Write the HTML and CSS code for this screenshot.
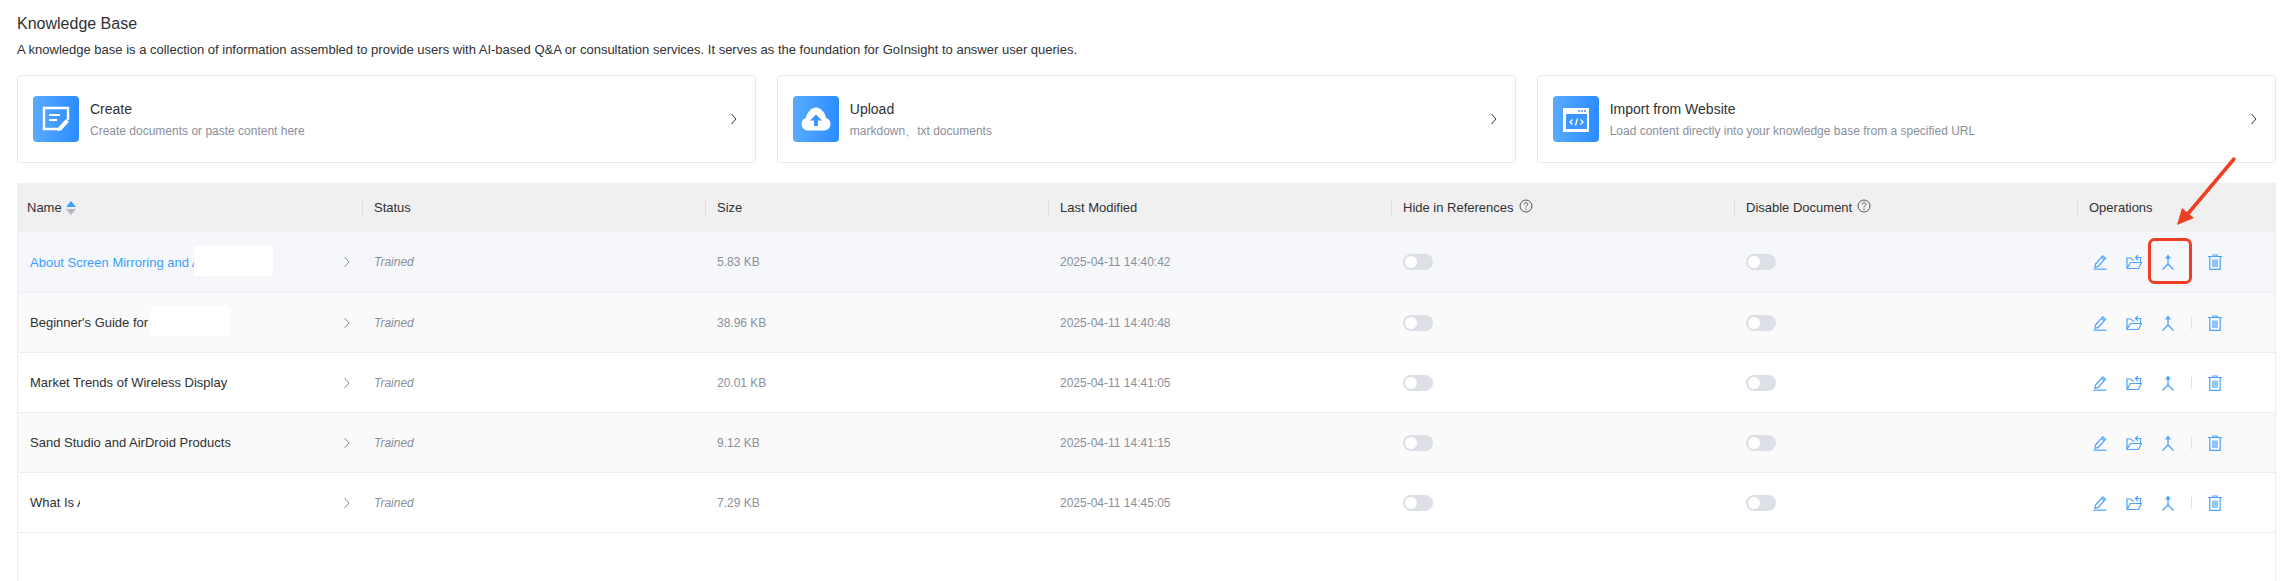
FILE: index.html

```html
<!DOCTYPE html>
<html lang="en">
<head>
    <meta charset="UTF-8">
    <title>Knowledge Base</title>
    <meta name="viewport" content="width=device-width, initial-scale=1.0">
    <link rel="stylesheet" href="styles.css">
</head>
<body>

<svg class="defs" width="0" height="0">
    <symbol id="i-edit" viewBox="0 0 16 16"><path d="M3.500 10 10.800 1.800l2.700 2.400-7.300 8.200-3.200.9zM9.500 3.300l2.700 2.400" fill="none" stroke="currentColor" stroke-width="1.200"/><path d="M1.500 15.200h13" stroke="currentColor" stroke-width="1.200"/></symbol>
    <symbol id="i-folder" viewBox="0 0 16 16"><path d="M1 7V14.500h11.500L15.500 8.500H4.500L1 14.500M1 7V4h4l1.500 2h2M9.500 3.500H14.500V8M12 1 9.500 3.500 12 6" fill="none" stroke="currentColor" stroke-width="1.200"/></symbol>
    <symbol id="i-merge" viewBox="0 0 16 16"><path d="M8 3v7M8 10 2.500 15.500M8 10l5.500 5.500" fill="none" stroke="currentColor" stroke-width="1.300"/><path d="M8 .5 5 4.500h6z" fill="currentColor"/></symbol>
    <symbol id="i-trash" viewBox="0 0 16 16"><path d="M1 2.500h14M6 2.500V1h4v1.500M2.800 2.500v12.800h10.400V2.500M6 5.500v7.500M8 5.500v7.500M10 5.500v7.500" fill="none" stroke="currentColor" stroke-width="1.200"/></symbol>
    <symbol id="i-chev" viewBox="0 0 8 12"><path d="M1.500 1 6 6l-4.500 5" fill="none" stroke="currentColor"/></symbol>
    <symbol id="i-help" viewBox="0 0 14 14"><circle cx="7" cy="7" r="6" fill="none" stroke="currentColor"/><path d="M5.200 5.400C5.200 3 8.800 3 8.800 5.300 8.800 6.700 7 6.700 7 8.400" fill="none" stroke="currentColor"/><circle cx="7" cy="10.300" r=".7" fill="currentColor"/></symbol>
</svg>

<div class="page">
    <h1 class="title">Knowledge Base</h1>
    <p class="intro">A knowledge base is a collection of information assembled to provide users with AI-based Q&amp;A or consultation services. It serves as the foundation for GoInsight to answer user queries.</p>

    <div class="cards">
        <div class="card">
            <svg class="card-icon" viewBox="0 0 46 46"><path d="M29 33H11V12h24v12" fill="none" stroke="#fff" stroke-width="2.400"/><path d="M16 19h11M16 24h8" stroke="#fff" stroke-width="2"/><path d="M24.500 35.500l1.200-4.500 7.300-8 3 2.700-7.300 8z" fill="#fff"/></svg>
            <div class="card-text">
                <div class="card-name">Create</div>
                <div class="card-desc">Create documents or paste content here</div>
            </div>
            <svg class="card-chev"><use href="#i-chev"/></svg>
        </div>
        <div class="card">
            <svg class="card-icon" viewBox="0 0 46 46"><path d="M15 34a6 6 0 0 1-1.500-11.800C14.500 16 18.500 12 23 12s8.500 4 9.500 10.200A6 6 0 0 1 31 34z" fill="#fff" stroke="#fff" stroke-width="1"/><path d="M23 18.500 17 24.500h4V30h4v-5.500h4z" fill="#3b96ff"/></svg>
            <div class="card-text">
                <div class="card-name">Upload</div>
                <div class="card-desc">markdown、txt documents</div>
            </div>
            <svg class="card-chev"><use href="#i-chev"/></svg>
        </div>
        <div class="card">
            <svg class="card-icon" viewBox="0 0 46 46"><path d="M10 12h26v24H10z" fill="#fff"/><path d="M13 18h21v15H13z" fill="#3b96ff"/><path d="M25 15h2M28 15h2M31 15h2" stroke="#3b96ff" stroke-width="1.500"/><path d="M19.500 23.500 17 26l2.500 2.500M27.500 23.500 30 26l-2.500 2.500M24.500 22.500l-2 7" fill="none" stroke="#fff" stroke-width="1.300"/></svg>
            <div class="card-text">
                <div class="card-name">Import from Website</div>
                <div class="card-desc">Load content directly into your knowledge base from a specified URL</div>
            </div>
            <svg class="card-chev"><use href="#i-chev"/></svg>
        </div>
    </div>

    <div class="table-wrap">
        <table class="docs">
            <colgroup>
                <col class="c-name"><col class="c-mid"><col class="c-mid"><col class="c-mid"><col class="c-mid"><col class="c-mid"><col>
            </colgroup>
            <thead>
                <tr>
                    <th><span class="th-in">Name <span class="sort"><i class="up"></i><i class="down"></i></span></span></th>
                    <th><span class="th-in">Status</span></th>
                    <th><span class="th-in">Size</span></th>
                    <th><span class="th-in">Last Modified</span></th>
                    <th><span class="th-in">Hide in References <svg class="help"><use href="#i-help"/></svg></span></th>
                    <th><span class="th-in">Disable Document <svg class="help"><use href="#i-help"/></svg></span></th>
                    <th class="last"><span class="th-in">Operations</span></th>
                </tr>
            </thead>
            <tbody>
                <tr class="hover">
                    <td class="name link"><span>About Screen Mirroring and AirDroid</span><span class="mask mask-1"></span><svg class="row-chev"><use href="#i-chev"/></svg></td>
                    <td class="status">Trained</td><td>5.83 KB</td><td>2025-04-11 14:40:42</td>
                    <td><span class="switch"></span></td><td><span class="switch"></span></td>
                    <td class="ops"><svg><use href="#i-edit"/></svg><svg><use href="#i-folder"/></svg><svg><use href="#i-merge"/></svg><svg class="del"><use href="#i-trash"/></svg></td>
                </tr>
                <tr class="stripe">
                    <td class="name"><span>Beginner's Guide for</span><span class="mask mask-2"></span><svg class="row-chev"><use href="#i-chev"/></svg></td>
                    <td class="status">Trained</td><td>38.96 KB</td><td>2025-04-11 14:40:48</td>
                    <td><span class="switch"></span></td><td><span class="switch"></span></td>
                    <td class="ops"><svg><use href="#i-edit"/></svg><svg><use href="#i-folder"/></svg><svg><use href="#i-merge"/></svg><i class="sep"></i><svg class="del"><use href="#i-trash"/></svg></td>
                </tr>
                <tr>
                    <td class="name"><span>Market Trends of Wireless Display</span><svg class="row-chev"><use href="#i-chev"/></svg></td>
                    <td class="status">Trained</td><td>20.01 KB</td><td>2025-04-11 14:41:05</td>
                    <td><span class="switch"></span></td><td><span class="switch"></span></td>
                    <td class="ops"><svg><use href="#i-edit"/></svg><svg><use href="#i-folder"/></svg><svg><use href="#i-merge"/></svg><i class="sep"></i><svg class="del"><use href="#i-trash"/></svg></td>
                </tr>
                <tr class="stripe">
                    <td class="name"><span>Sand Studio and AirDroid Products</span><svg class="row-chev"><use href="#i-chev"/></svg></td>
                    <td class="status">Trained</td><td>9.12 KB</td><td>2025-04-11 14:41:15</td>
                    <td><span class="switch"></span></td><td><span class="switch"></span></td>
                    <td class="ops"><svg><use href="#i-edit"/></svg><svg><use href="#i-folder"/></svg><svg><use href="#i-merge"/></svg><i class="sep"></i><svg class="del"><use href="#i-trash"/></svg></td>
                </tr>
                <tr>
                    <td class="name"><span>What Is AirDroid</span><span class="mask mask-3"></span><svg class="row-chev"><use href="#i-chev"/></svg></td>
                    <td class="status">Trained</td><td>7.29 KB</td><td>2025-04-11 14:45:05</td>
                    <td><span class="switch"></span></td><td><span class="switch"></span></td>
                    <td class="ops"><svg><use href="#i-edit"/></svg><svg><use href="#i-folder"/></svg><svg><use href="#i-merge"/></svg><i class="sep"></i><svg class="del"><use href="#i-trash"/></svg></td>
                </tr>
            </tbody>
        </table>
    </div>

    <!-- red annotation drawn over the screenshot -->
    <svg class="annot" width="120" height="135" viewBox="0 0 120 135">
        <path d="M90 3 42 60" fill="none" stroke="#ee3e23" stroke-width="3.500" stroke-linecap="round"/>
        <path d="M33 69 38 52 50 62z" fill="#ee3e23"/>
        <rect x="5.500" y="83.500" width="41" height="43" rx="5" fill="none" stroke="#ee3e23" stroke-width="3"/>
    </svg>
</div>

</body>
</html>
```

FILE: styles.css

```css
* { box-sizing: border-box; }
html, body { margin: 0; padding: 0; height: 100%; overflow: hidden; }
body { font-family: "Liberation Sans", Arial, sans-serif; background: #fff; color: #303133; }
.defs { position: absolute; }

.page { position: relative; height: 581px; padding: 14px 9px 0 17px; }
.title { margin: 0; font-size: 16px; font-weight: normal; line-height: 20px; color: #303133; }
.intro { margin: 7px 0 0; font-size: 13px; line-height: 18px; color: #303133; white-space: nowrap; }

.cards { display: grid; grid-template-columns: repeat(3, 1fr); gap: 20.5px; margin-top: 16px; }
.card { display: flex; align-items: center; height: 88px; padding: 0 17px 0 15px; border: 1px solid #e8e8e8; border-radius: 4px; }
.card-icon { flex: none; width: 46px; height: 46px; border-radius: 4px; background: linear-gradient(90deg, #5aabff, #2b8cff); }
.card-text { flex: 1; margin-left: 11px; }
.card-name { font-size: 14px; line-height: 18px; color: #303133; }
.card-desc { margin-top: 5px; font-size: 12px; line-height: 16px; color: #8a8f9c; }
.card-chev { flex: none; width: 8px; height: 12px; color: #333; }

.table-wrap { height: 400px; margin-top: 20px; border-left: 1px solid #ebeef5; border-right: 1px solid #ebeef5; }
.docs { width: 100%; border-collapse: collapse; table-layout: fixed; font-size: 12px; }
.c-name { width: 345px; }
.c-mid { width: 343px; }
.docs th { height: 49px; padding: 0; background: #f0f0f0; font-weight: normal; font-size: 13px; color: #303133; text-align: left; }
.th-in { display: flex; align-items: center; height: 14px; padding-left: 11px; border-right: 1px solid #d9d9d9; white-space: nowrap; }
.docs th:first-child .th-in { padding-left: 9px; }
.docs th.last .th-in { border-right: 0; }
.sort { display: inline-flex; flex-direction: column; gap: 2px; margin-left: 4px; }
.sort i { display: block; width: 0; height: 0; border-left: 5px solid transparent; border-right: 5px solid transparent; }
.sort .up { border-bottom: 6px solid #409eff; }
.sort .down { border-top: 6px solid #b4b8c2; }
.help { width: 14px; height: 14px; margin: -3px 0 0 5px; color: #555; }

.docs td { height: 60px; padding: 1px 0 0 11px; border-bottom: 1px solid #ebeef5; color: #8a8f9c; }
.docs td.name { position: relative; padding-left: 12px; font-size: 13px; color: #303133; }
.docs td.link { color: #409eff; }
.docs td.status { font-style: italic; }
.docs tr.hover td { background: #f5f7fb; }
.docs tr.stripe td { background: #fafafa; }
.row-chev { position: absolute; top: 24px; left: 325px; width: 8px; height: 12px; color: #8a8f9c; }
.mask { position: absolute; background: #fff; }
.mask-1 { left: 176px; top: 14px; width: 79px; height: 30px; }
.mask-2 { left: 133px; top: 13px; width: 78px; height: 30px; }
.mask-3 { left: 62px; top: 14px; width: 79px; height: 30px; }

.switch { display: inline-block; position: relative; width: 30px; height: 16px; border-radius: 8px; background: #dcdfe6; vertical-align: -4px; }
.switch::after { content: ""; position: absolute; left: 2px; top: 2px; width: 12px; height: 12px; border-radius: 50%; background: #fff; }

.docs td.ops { padding-left: 14px; white-space: nowrap; }
.ops svg { width: 16px; height: 16px; margin-right: 18px; vertical-align: middle; color: #4ba3ff; }
.ops svg.del { margin-right: 0; }
.ops svg:nth-of-type(3) { margin-right: 15px; }
.ops .sep { display: inline-block; width: 1px; height: 12px; margin-right: 15px; background: #dcdfe6; vertical-align: middle; }
.hover .ops svg:nth-of-type(3) { margin-right: 31px; }

.annot { position: absolute; left: 2144px; top: 156px; }
```
